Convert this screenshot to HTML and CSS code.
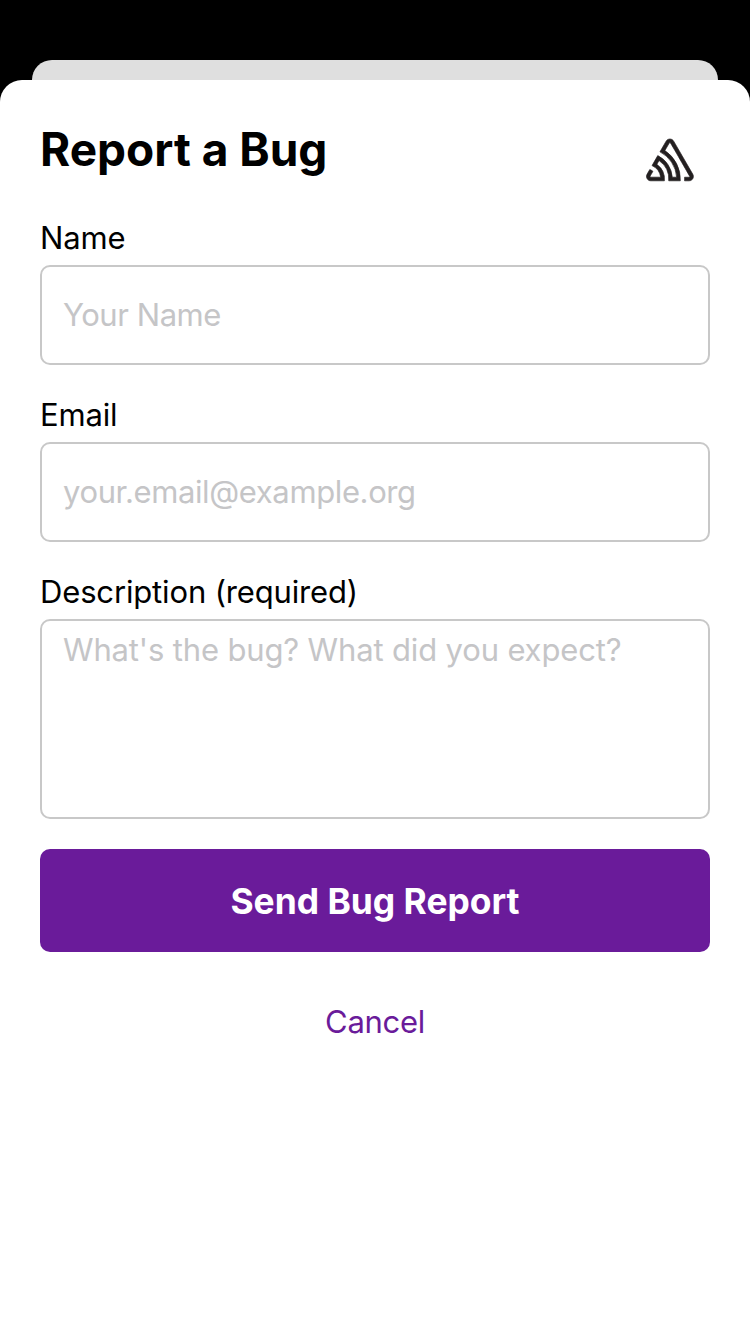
FILE: index.html
```html
<!DOCTYPE html>
<html lang="en">
<head>
<meta charset="utf-8">
<title>Report a Bug</title>
<link rel="stylesheet" href="styles.css">
</head>
<body>
<div class="backdrop-card"></div>
<main class="sheet">
  <header class="header">
    <h1 class="title">Report a Bug</h1>
    <svg class="logo" viewBox="0 0 72 66" aria-label="Sentry"><path fill="#231f20" stroke="#231f20" stroke-width=".7" stroke-linejoin="round" d="M29,2.26a4.67,4.67,0,0,0-8,0L14.42,13.53A32.21,32.21,0,0,1,32.17,40.19H27.55A27.68,27.68,0,0,0,12.09,17.47L6,28a15.92,15.92,0,0,1,9.23,12.17H4.62A.76.76,0,0,1,4,39.06l2.94-5a10.74,10.74,0,0,0-3.36-1.9l-2.91,5a4.54,4.54,0,0,0,1.69,6.24A4.66,4.66,0,0,0,4.62,44H19.15a19.4,19.4,0,0,0-8-17.31l2.31-4A23.87,23.87,0,0,1,23.76,44H36.07a35.88,35.88,0,0,0-16.41-31.8l4.67-8a.77.77,0,0,1,1.05-.27c.53.29,20.29,34.77,20.66,35.17a.76.76,0,0,1-.68,1.13H40.6q.09,1.91,0,3.81h4.78A4.59,4.59,0,0,0,50,39.43a4.49,4.49,0,0,0-.62-2.28Z" transform="translate(12.4 11) scale(.94 .95)"/></svg>
  </header>
  <label class="label">Name</label>
  <div class="field name">Your Name</div>
  <label class="label">Email</label>
  <div class="field email">your.email@example.org</div>
  <label class="label">Description (required)</label>
  <div class="field area">What's the bug? What did you expect?</div>
  <button class="send">Send Bug Report</button>
  <button class="cancel">Cancel</button>
</main>
</body>
</html>
```
FILE: styles.css
```css
* { box-sizing: border-box; }
body { margin: 0; height: 1334px; padding-top: 60px; background: #000; overflow: hidden; font-family: Inter, "Liberation Sans", sans-serif; font-size: 31px; color: #000; }
.backdrop-card { height: 20px; margin: 0 32px; border-radius: 20px 20px 0 0; background: #dfdfdf; }
.sheet { height: 1254px; padding: 40px 40px 0; border-radius: 22px 22px 0 0; background: #fff; display: flex; flex-direction: column; }
.header { display: flex; justify-content: space-between; height: 98px; }
.title { margin: 0; font-size: 46px; line-height: 58px; font-weight: 700; white-space: nowrap; }
.logo { width: 72px; height: 66px; margin: 8px 4px 0 0; }
.label { height: 47px; line-height: 40px; letter-spacing: -0.15px; white-space: nowrap; }
.field { height: 100px; margin-bottom: 30px; padding: 0 21px; border: 2px solid #c8c8c8; border-radius: 10px; line-height: 96px; color: #c5c5c7; white-space: nowrap; }
.name { letter-spacing: -0.45px; }
.email { letter-spacing: -0.38px; }
.area { height: 200px; line-height: 58px; letter-spacing: -0.15px; }
.send { height: 103px; border: 0; border-radius: 10px; background: #6a1b9a; color: #fff; font: 700 35.4px/40px Inter, sans-serif; padding: 2px 0 0; }
.cancel { align-self: center; margin-top: 50px; border: 0; padding: 0; background: none; color: #6a1b9a; font: 400 31px/40px Inter, sans-serif; letter-spacing: -0.3px; }
```
